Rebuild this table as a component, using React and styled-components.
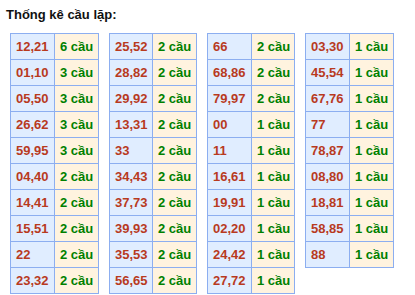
import React from "react";
import styled, { createGlobalStyle } from "styled-components";

const GlobalStyle = createGlobalStyle`
  body {
    margin: 0;
    background: #ffffff;
    font-family: "Liberation Sans", Arial, sans-serif;
  }
`;

const tables = [
  {
    cols: [44, 44],
    rows: [
      ["12,21", 6], ["01,10", 3], ["05,50", 3], ["26,62", 3], ["59,95", 3],
      ["04,40", 2], ["14,41", 2], ["15,51", 2], ["22", 2], ["23,32", 2],
    ],
  },
  {
    cols: [43, 44],
    rows: [
      ["25,52", 2], ["28,82", 2], ["29,92", 2], ["13,31", 2], ["33", 2],
      ["34,43", 2], ["37,73", 2], ["39,93", 2], ["35,53", 2], ["56,65", 2],
    ],
  },
  {
    cols: [44, 43],
    rows: [
      ["66", 2], ["68,86", 2], ["79,97", 2], ["00", 1], ["11", 1],
      ["16,61", 1], ["19,91", 1], ["02,20", 1], ["24,42", 1], ["27,72", 1],
    ],
  },
  {
    cols: [44, 44],
    rows: [
      ["03,30", 1], ["45,54", 1], ["67,76", 1], ["77", 1], ["78,87", 1],
      ["08,80", 1], ["18,81", 1], ["58,85", 1], ["88", 1],
    ],
  },
];

const Wrap = styled.div`
  padding: 7px 0 0 0;
`;

const Title = styled.div`
  font-size: 13px;
  font-weight: bold;
  line-height: 16px;
  color: #111111;
  padding-left: 6px;
`;

const Tables = styled.div`
  display: flex;
  align-items: flex-start;
  gap: 10px;
  margin-top: 10px;
  padding-left: 10px;
`;

const Table = styled.div`
  display: grid;
  grid-template-columns: ${(p) => p.$c1}px ${(p) => p.$c2}px;
  border-top: 1px solid #8caef0;
  border-left: 1px solid #8caef0;
`;

const Cell = styled.div`
  box-sizing: border-box;
  height: 26px;
  line-height: 25px;
  padding-left: 5px;
  border-right: 1px solid #8caef0;
  border-bottom: 1px solid #8caef0;
  font-size: 13px;
  font-weight: bold;
  white-space: nowrap;
  background: ${(p) => (p.$count ? "#fff3df" : "#e0edff")};
  color: ${(p) => (p.$count ? "#008000" : "#b83a1e")};
`;

export default function App() {
  return (
    <Wrap>
      <GlobalStyle />
      <Title>Thống kê cầu lặp:</Title>
      <Tables>
        {tables.map((t, i) => (
          <Table key={i} $c1={t.cols[0]} $c2={t.cols[1]}>
            {t.rows.map(([pair, n]) => (
              <React.Fragment key={pair}>
                <Cell>{pair}</Cell>
                <Cell $count>{n} cầu</Cell>
              </React.Fragment>
            ))}
          </Table>
        ))}
      </Tables>
    </Wrap>
  );
}
